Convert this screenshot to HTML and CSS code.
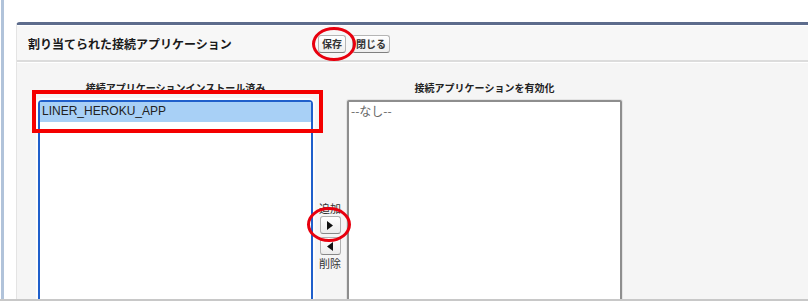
FILE: index.html
```html
<!DOCTYPE html>
<html lang="ja">

<head>
  <meta charset="UTF-8" />
  <title>割り当てられた接続アプリケーション</title>
  <link rel="stylesheet" href="styles.css">
</head>

<body>

  <div class="page">
    <div class="edge"></div>

    <div class="panel">
      <div class="panel-header">
        <h2 class="panel-title">割り当てられた接続アプリケーション</h2>
        <div class="btn-group">
          <button class="btn">保存</button>
          <button class="btn">閉じる</button>
        </div>
      </div>

      <div class="panel-body">
        <div class="duel-list">
          <div class="list-col">
            <div class="list-label">接続アプリケーションインストール済み</div>
            <div class="listbox listbox-focus">
              <div class="option selected">LINER_HEROKU_APP</div>
            </div>
          </div>

          <div class="move-col">
            <span class="move-label">追加</span>
            <button class="arrow-btn">
              <svg width="6" height="9" viewBox="0 0 6 9"><polygon points="0,0 6,4.5 0,9" fill="#111" /></svg>
            </button>
            <button class="arrow-btn">
              <svg width="6" height="9" viewBox="0 0 6 9"><polygon points="6,0 0,4.5 6,9" fill="#111" /></svg>
            </button>
            <span class="move-label">削除</span>
          </div>

          <div class="list-col">
            <div class="list-label">接続アプリケーションを有効化</div>
            <div class="listbox">
              <div class="option empty">--なし--</div>
            </div>
          </div>
        </div>
      </div>
    </div>
  </div>

  <!-- annotations drawn over the screenshot -->
  <div class="mark mark-save"></div>
  <div class="mark mark-add"></div>
  <div class="mark-box"></div>

</body>

</html>
```

FILE: styles.css
```css
body {
  margin: 0;
  font-family: "Noto Sans CJK JP", "Liberation Sans", sans-serif;
  background: #fff;
  color: #222;
  overflow: hidden;
}

.page {
  display: flex;
  height: 299px;
  border-bottom: 2px solid #c8c8c8;
  overflow: hidden;
}

.edge {
  width: 3px;
  margin-left: 1px;
  background: #b1c3da;
  flex-shrink: 0;
}

.panel {
  flex: 1;
  margin: 22px 0 0 12px;
  border-top: 3px solid #5d6c8c;
  border-left: 1px solid #e4e4e4;
  border-top-left-radius: 4px;
  background: #f5f5f5;
}

.panel-header {
  display: flex;
  align-items: center;
  height: 34px;
  padding-left: 11px;
  border-top: 1px solid #fff;
  border-bottom: 2px solid #dcdcdc;
  background: #f7f7f7;
}

.panel-title {
  width: 290px;
  margin: 0;
  font-size: 12px;
  font-weight: bold;
  color: #1a1a1a;
}

.btn-group {
  display: flex;
  gap: 6px;
  margin-top: 1px;
}

.btn {
  height: 18px;
  padding: 0 3px;
  font-family: "Noto Sans CJK JP", sans-serif;
  font-size: 10px;
  font-weight: bold;
  line-height: 14px;
  color: #333;
  background: linear-gradient(#ffffff, #eeeeee);
  border: 1px solid #b5b5b5;
  border-bottom-color: #7f7f7f;
  border-radius: 3px;
}

.panel-body {
  border-top: 1px solid #fff;
  padding: 18px 0 0 21px;
}

.duel-list {
  display: grid;
  grid-template-columns: 275px 34px 275px;
}

.list-label {
  text-align: center;
  font-size: 10px;
  font-weight: bold;
  line-height: 14px;
  color: #222;
  margin-bottom: 5px;
}

.listbox {
  height: 220px;
  background: #fff;
  border: 2px solid #8e8e8e;
  border-radius: 2px;
  box-shadow: 0 0 0 1px #e4e4e4;
}

.listbox-focus {
  border-color: #1f5fcb;
  border-radius: 4px;
  box-shadow: 0 0 0 2px #fdfdfd;
}

.option {
  height: 20px;
  line-height: 18px;
  padding-left: 2px;
  font-family: "Liberation Sans", "Noto Sans CJK JP", sans-serif;
  font-size: 12px;
}

.selected {
  background: #a8d0f6;
  color: #222;
}

.empty {
  color: #666;
  font-family: "Noto Sans CJK JP", sans-serif;
}

.move-col {
  display: flex;
  flex-direction: column;
  align-items: center;
  padding-top: 121px;
}

.move-label {
  font-size: 11px;
  line-height: 13px;
  color: #333;
}

.arrow-btn {
  display: flex;
  align-items: center;
  justify-content: center;
  width: 21px;
  height: 18px;
  padding: 0;
  margin: 1px 0 2px;
  background: linear-gradient(#ffffff, #ececec);
  border: 1px solid #b0b0b0;
  border-bottom-color: #888;
  border-radius: 3px;
}

.mark {
  position: absolute;
  border: 3px solid #e8000e;
  border-radius: 50%;
  box-sizing: border-box;
}

.mark-save {
  left: 312px;
  top: 27px;
  width: 44px;
  height: 34px;
}

.mark-add {
  left: 307px;
  top: 207px;
  width: 44px;
  height: 35px;
}

.mark-box {
  position: absolute;
  left: 32px;
  top: 90px;
  width: 291px;
  height: 43px;
  border: 4px solid #f40000;
  box-sizing: border-box;
}
```
